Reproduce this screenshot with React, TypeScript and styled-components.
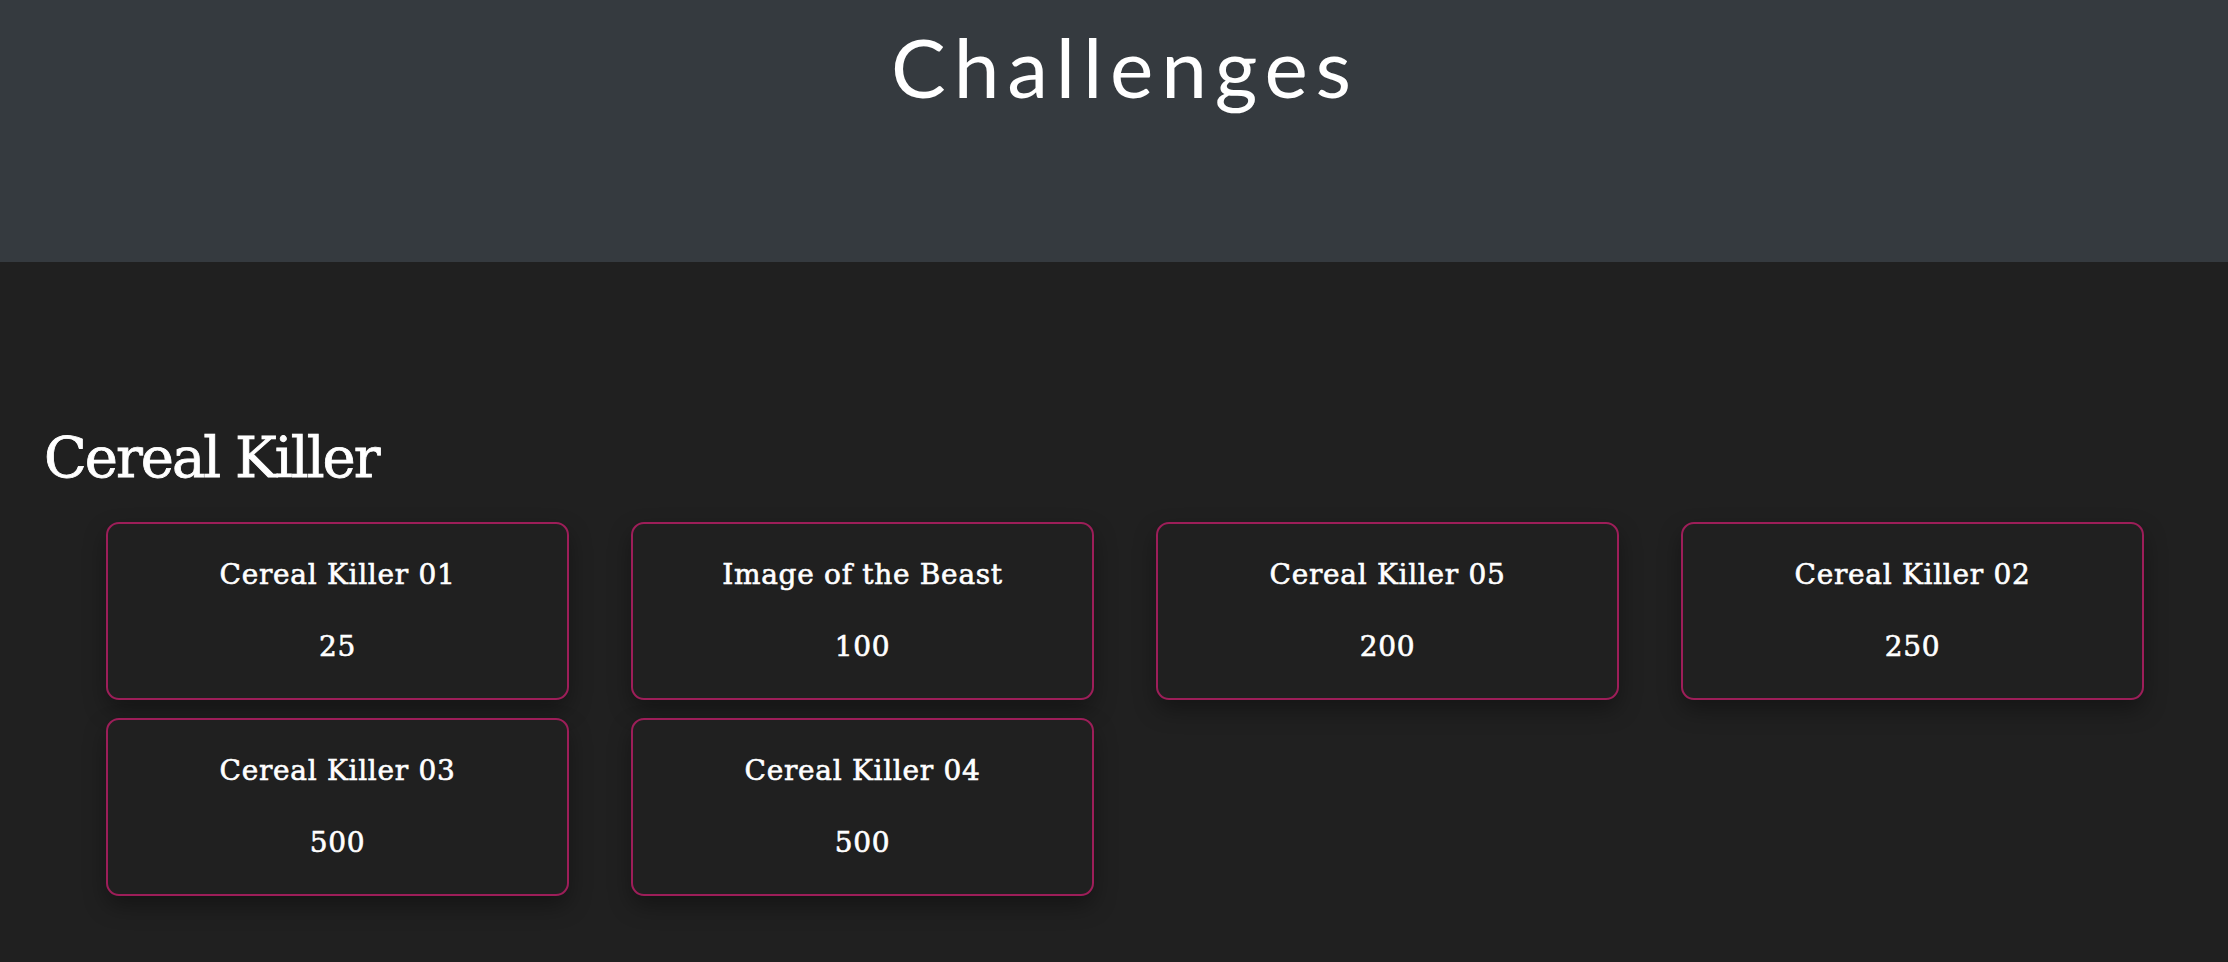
import React from "react";
import styled, { createGlobalStyle } from "styled-components";

const GlobalStyle = createGlobalStyle`
  html, body {
    margin: 0;
    padding: 0;
    background: #202020;
  }
  body {
    min-height: 962px;
    color: #ffffff;
    font-family: "DejaVu Serif", serif;
  }
`;

const Page = styled.div`
  min-height: 962px;
  background: #202020;
  display: flex;
  flex-direction: column;
`;

const Jumbotron = styled.header`
  height: 262px;
  box-sizing: border-box;
  background: #353a3f;
  padding-top: 17px;
  display: flex;
  justify-content: center;
  align-items: flex-start;
`;

const PageTitle = styled.h1`
  margin: 0 0 0 22px;
  font-family: "Lato", sans-serif;
  font-weight: 400;
  font-size: 82px;
  line-height: 1.2;
  letter-spacing: 7.8px;
  color: #ffffff;
`;

const Section = styled.section`
  padding: 162px 0 40px 44px;
  display: flex;
  flex-direction: column;
  gap: 31px;
`;

const CategoryTitle = styled.h2`
  margin: 0;
  font-family: "DejaVu Serif", serif;
  font-weight: 400;
  font-size: 56px;
  line-height: 1.2;
  letter-spacing: -2px;
  -webkit-text-stroke: 0.8px #ffffff;
  color: #ffffff;
`;

const Grid = styled.div`
  margin-left: 62px;
  display: grid;
  grid-template-columns: repeat(4, 463px);
  column-gap: 62px;
  row-gap: 18px;
`;

const Card = styled.button`
  box-sizing: border-box;
  height: 178px;
  padding: 33px 10px;
  background: #202020;
  border: 2px solid #9d1e59;
  border-radius: 13px;
  box-shadow: 0 10px 22px rgba(0, 0, 0, 0.35);
  display: flex;
  flex-direction: column;
  align-items: center;
  gap: 36px;
  color: #ffffff;
  cursor: pointer;
`;

const CardLine = styled.span`
  font-family: "DejaVu Serif", serif;
  font-size: 28px;
  line-height: 36px;
  letter-spacing: 0.7px;
  -webkit-text-stroke: 0.6px #ffffff;
  white-space: nowrap;
`;

const challenges = [
  { name: "Cereal Killer 01", value: 25 },
  { name: "Image of the Beast", value: 100 },
  { name: "Cereal Killer 05", value: 200 },
  { name: "Cereal Killer 02", value: 250 },
  { name: "Cereal Killer 03", value: 500 },
  { name: "Cereal Killer 04", value: 500 },
];

export default function App() {
  return (
    <>
      <GlobalStyle />
      <Page>
        <Jumbotron>
          <PageTitle>Challenges</PageTitle>
        </Jumbotron>
        <Section>
          <CategoryTitle>Cereal Killer</CategoryTitle>
          <Grid>
            {challenges.map((c) => (
              <Card key={c.name}>
                <CardLine>{c.name}</CardLine>
                <CardLine>{c.value}</CardLine>
              </Card>
            ))}
          </Grid>
        </Section>
      </Page>
    </>
  );
}
